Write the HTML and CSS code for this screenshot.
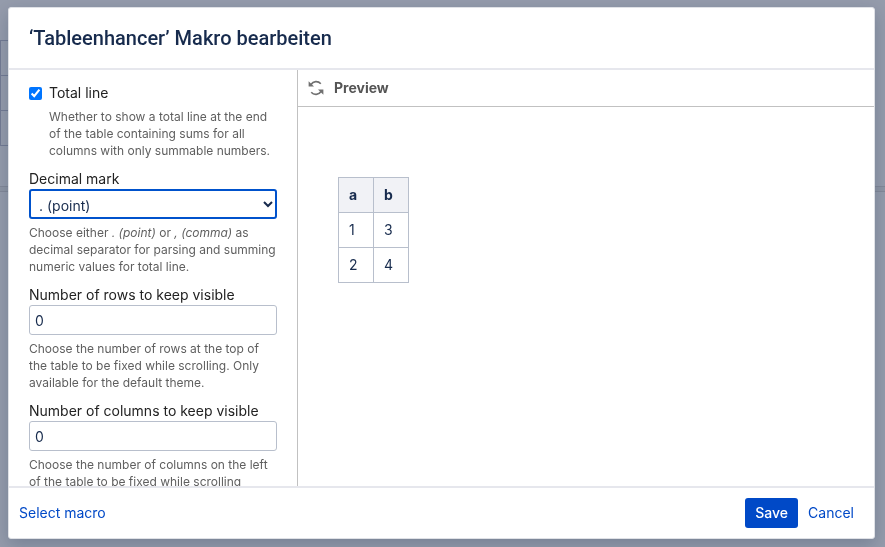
FILE: index.html
```html
<!DOCTYPE html>
<html lang="de">
  <head>
    <meta charset="UTF-8" />
    <meta name="viewport" content="width=device-width, initial-scale=1.0" />
    <title>Makro bearbeiten</title>
    <link rel="stylesheet" href="styles.css" />
  </head>
  <body>
    <!-- dimmed editor page behind the dialog -->
    <div class="page" aria-hidden="true">
      <div class="page-table">
        <div class="page-row"></div>
        <div class="page-row"></div>
        <div class="page-row"></div>
      </div>
      <div class="page-divider"></div>
    </div>

    <div class="overlay">
      <section class="dialog" role="dialog" aria-labelledby="dialog-title">
        <header class="dialog-header">
          <h2 id="dialog-title">‘Tableenhancer’ Makro bearbeiten</h2>
        </header>

        <div class="dialog-body">
          <form class="macro-form" id="macro-form">
            <div class="field field-checkbox">
              <input type="checkbox" id="total-line" checked />
              <label for="total-line">Total line</label>
              <p class="help">
                Whether to show a total line at the end of the table containing
                sums for all columns with only summable numbers.
              </p>
            </div>

            <div class="field">
              <label for="decimal-mark">Decimal mark</label>
              <div class="select-wrap">
                <select class="select" id="decimal-mark">
                  <option>. (point)</option>
                  <option>, (comma)</option>
                </select>
                <svg class="chevron" viewBox="0 0 10 7" aria-hidden="true">
                  <path d="M1 1l4 4 4-4" />
                </svg>
              </div>
              <p class="help">
                Choose either <em>. (point)</em> or <em>, (comma)</em> as
                decimal separator for parsing and summing numeric values for
                total line.
              </p>
            </div>

            <div class="field">
              <label for="rows">Number of rows to keep visible</label>
              <input class="text" type="text" id="rows" value="0" />
              <p class="help">
                Choose the number of rows at the top of the table to be fixed
                while scrolling. Only available for the default theme.
              </p>
            </div>

            <div class="field">
              <label for="columns">Number of columns to keep visible</label>
              <input class="text" type="text" id="columns" value="0" />
              <p class="help">
                Choose the number of columns on the left of the table to be
                fixed while scrolling
              </p>
            </div>
          </form>

          <div class="preview">
            <div class="preview-header">
              <button class="refresh" type="button" aria-label="Refresh">
                <svg viewBox="0 0 16 16" aria-hidden="true">
                  <path class="arc" d="M3 4.5C5.2 1 10 .6 12.8 3.8" />
                  <path class="arc" d="M13 11.5C10.8 15 6 15.4 3.2 12.2" />
                  <path class="tip" d="M.6 1.2v5.4H6z" />
                  <path class="tip" d="M15.4 14.8V9.4H10z" />
                </svg>
              </button>
              <h3>Preview</h3>
            </div>
            <div class="preview-content">
              <table class="macro-table">
                <thead>
                  <tr>
                    <th>a</th>
                    <th>b</th>
                  </tr>
                </thead>
                <tbody>
                  <tr>
                    <td>1</td>
                    <td>3</td>
                  </tr>
                  <tr>
                    <td>2</td>
                    <td>4</td>
                  </tr>
                </tbody>
              </table>
            </div>
          </div>
        </div>

        <footer class="dialog-footer">
          <a class="link" href="#">Select macro</a>
          <div class="actions">
            <button class="btn-save" type="submit" form="macro-form">Save</button>
            <button class="link" type="button">Cancel</button>
          </div>
        </footer>
      </section>
    </div>
  </body>
</html>
```

FILE: styles.css
```css
* {
  margin: 0;
  padding: 0;
  box-sizing: border-box;
}

body {
  min-height: 100vh;
  overflow: hidden;
  background: #959cac;
  color: #172b4d;
  font-family: Inter, Roboto, sans-serif;
  font-size: 14px;
  line-height: 20px;
}

button,
input,
select {
  font: inherit;
  color: inherit;
}

/* page behind the dialog */
.page {
  padding-top: 40px;
}

.page-table {
  width: 120px;
  border: 1px solid #737c94;
  border-bottom: 0;
}

.page-row {
  height: 35px;
  border-bottom: 1px solid #737c94;
}

.page-divider {
  height: 6px;
  margin-top: 40px;
  border: 1px solid #838999;
  border-width: 1px 0;
  background: #8f96a5;
}

.overlay {
  position: fixed;
  inset: 0;
  display: flex;
  padding: 7px 10px 8px 8px;
}

.dialog {
  flex: 1;
  min-width: 0;
  display: flex;
  flex-direction: column;
  background: #fff;
  border: 1px solid #dfe1e6;
  border-radius: 3px;
  box-shadow: 0 6px 18px rgba(9, 30, 66, 0.22);
  overflow: hidden;
}

.dialog-header {
  padding: 15px 20px;
  border-bottom: 2px solid #e6e7ed;
}

.dialog-header h2 {
  font-family: Roboto, sans-serif;
  font-size: 20px;
  font-weight: 500;
  line-height: 30px;
}

.dialog-body {
  flex: 1;
  min-height: 0;
  display: flex;
}

/* parameters */
.macro-form {
  flex: 0 0 289px;
  padding: 13px 20px 0;
  border-right: 1px solid #c1c1c1;
  overflow: hidden;
}

.field {
  margin-bottom: 10px;
}

.field label {
  display: block;
  color: #222;
}

.field-checkbox {
  display: grid;
  grid-template-columns: 13px 1fr;
  column-gap: 7px;
  align-items: center;
}

.field-checkbox input {
  width: 13px;
  height: 13px;
  accent-color: #0075ff;
}

.field-checkbox .help {
  grid-column: 2;
}

.help {
  margin-top: 5px;
  color: #5f5f5f;
  font-size: 12px;
  line-height: 17px;
}

.text,
.select {
  display: block;
  width: 100%;
  height: 30px;
  padding: 1px 5px 0;
  background: #fff;
  border: 1px solid #b8bfcc;
  border-radius: 3px;
}

.select-wrap {
  position: relative;
}

.select {
  padding: 3px 8px 0;
  appearance: none;
  border: 2px solid #0052cc;
  outline: none;
}

.chevron {
  position: absolute;
  top: 12px;
  right: 4px;
  width: 10px;
  height: 7px;
  fill: none;
  stroke: #172b4d;
  stroke-width: 2;
  pointer-events: none;
}

/* preview */
.preview {
  flex: 1;
  min-width: 0;
}

.preview-header {
  display: flex;
  align-items: center;
  gap: 10px;
  height: 37px;
  padding: 0 10px;
  border-bottom: 1px solid #c1c1c1;
}

.preview-header h3 {
  color: #555;
  font-size: 14px;
  font-weight: 700;
}

.refresh {
  display: flex;
  background: none;
  border: 0;
  cursor: pointer;
}

.refresh svg {
  width: 16px;
  height: 16px;
}

.arc {
  fill: none;
  stroke: #707070;
  stroke-width: 1.6;
}

.tip {
  fill: #707070;
}

.preview-content {
  padding: 70px 40px;
}

.macro-table {
  border-collapse: collapse;
}

.macro-table th,
.macro-table td {
  width: 35px;
  height: 35px;
  padding: 7px 10px;
  border: 1px solid #b8bfcc;
  text-align: left;
}

.macro-table th {
  background: #f1f2f6;
  font-weight: 700;
}

/* footer */
.dialog-footer {
  display: flex;
  align-items: center;
  justify-content: space-between;
  padding: 10px;
  border-top: 2px solid #e6e7ed;
}

.actions {
  display: flex;
  align-items: center;
}

.link {
  color: #0049c7;
  text-decoration: none;
  background: none;
  border: 0;
}

.actions .link {
  padding: 0 10px;
  cursor: pointer;
}

.btn-save {
  height: 30px;
  padding: 0 10px;
  background: #0049c7;
  border: 0;
  border-radius: 3px;
  color: #fff;
  font-weight: 500;
  cursor: pointer;
}
```
